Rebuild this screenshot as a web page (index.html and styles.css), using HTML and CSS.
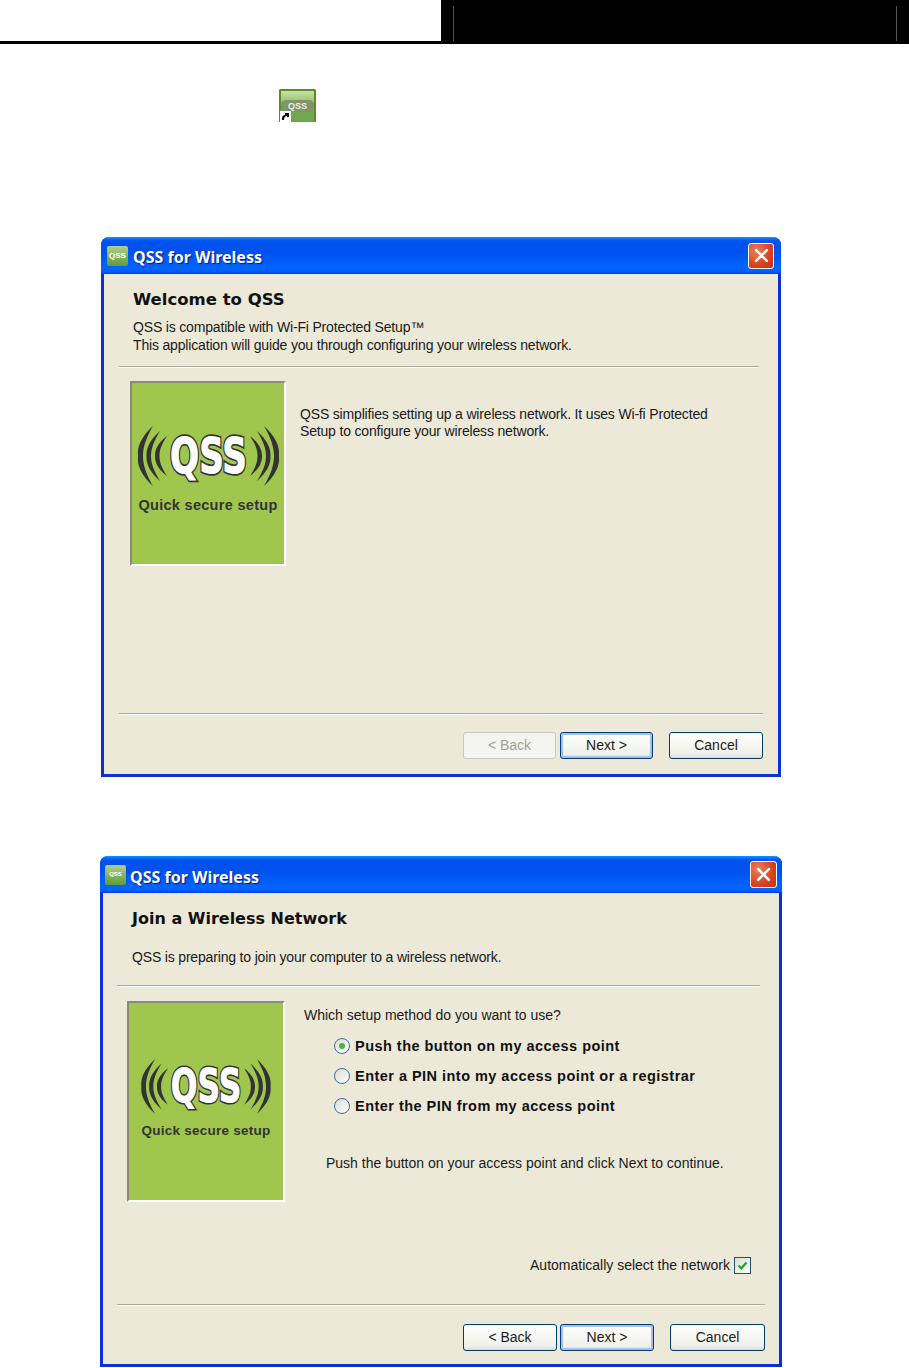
FILE: index.html
```html
<!DOCTYPE html>
<html lang="en">
<head>
    <meta charset="UTF-8">
    <title>QSS for Wireless</title>
    <link rel="stylesheet" href="styles.css">
</head>
<body>
    <div class="page-header">
        <div class="header-left"></div>
        <div class="header-right"></div>
    </div>

    <!-- Desktop shortcut -->
    <div class="shortcut-row">
        <div class="shortcut">
            <span class="shortcut-band">QSS</span>
            <span class="shortcut-arrow">
                <svg viewBox="0 0 9 9" width="9" height="9"><path d="M1 8 L1 6 C1 4 3 3 4 3 L4 1 L8 1 L8 5 L6 5 L6 4 C4 4 3 5 3 8 Z" fill="#000"/></svg>
            </span>
        </div>
    </div>

    <!-- Welcome step -->
    <div class="window window-welcome">
        <div class="titlebar">
            <span class="title-icon">QSS</span>
            <span class="title-text">QSS for Wireless</span>
            <span class="close-btn">
                <svg viewBox="0 0 14 14" width="15" height="15"><path d="M2 2 L12 12 M12 2 L2 12" stroke="#fff" stroke-width="2.4" stroke-linecap="round"/></svg>
            </span>
        </div>
        <div class="head">
            <h2>Welcome to QSS</h2>
            <p class="head-text">QSS is compatible with Wi-Fi Protected Setup™<br>This application will guide you through configuring your wireless network.</p>
        </div>
        <div class="rule rule-head"></div>
        <div class="main">
            <div class="logo">
                <svg class="logo-mark" viewBox="0 0 141 60">
                    <g id="qss-mark">
                        <g id="qss-waves" fill="#333">
                            <path d="M15 0 C3 11 -1 21 0 30 C-1 39 3 49 15 60 C8 48 5 39 5 30 C5 21 8 12 15 0 Z"/>
                            <path d="M22 5 C12 14 8 22 8.500 30 C8 38 12 46 22 55 C16 45 13 38 13 30 C13 22 16 15 22 5 Z"/>
                            <path d="M29 10 C20 17 17 23 17 30 C17 37 20 43 29 50 C24 42 21.500 37 21.500 30 C21.500 23 24 18 29 10 Z"/>
                        </g>
                        <use href="#qss-waves" transform="matrix(-1 0 0 1 141 0)"/>
                        <text class="logo-word logo-word-back" x="70.500" y="47" text-anchor="middle" textLength="77" lengthAdjust="spacingAndGlyphs">QSS</text>
                        <text class="logo-word" x="70.500" y="47" text-anchor="middle" textLength="77" lengthAdjust="spacingAndGlyphs">QSS</text>
                    </g>
                </svg>
                <span class="logo-caption">Quick secure setup</span>
            </div>
            <p class="intro">QSS simplifies setting up a wireless network. It uses Wi-fi Protected<br>Setup to configure your wireless network.</p>
        </div>
        <div class="rule rule-foot"></div>
        <div class="footer">
            <button class="btn btn-disabled">&lt; Back</button>
            <button class="btn btn-default">Next &gt;</button>
            <button class="btn btn-cancel">Cancel</button>
        </div>
    </div>

    <!-- Join network step -->
    <div class="window window-join">
        <div class="titlebar">
            <span class="title-icon">QSS</span>
            <span class="title-text">QSS for Wireless</span>
            <span class="close-btn">
                <svg viewBox="0 0 14 14" width="15" height="15"><path d="M2 2 L12 12 M12 2 L2 12" stroke="#fff" stroke-width="2.4" stroke-linecap="round"/></svg>
            </span>
        </div>
        <div class="head">
            <h2>Join a Wireless Network</h2>
            <p class="head-text head-single">QSS is preparing to join your computer to a wireless network.</p>
        </div>
        <div class="rule rule-head"></div>
        <div class="main">
            <div class="logo">
                <svg class="logo-mark" viewBox="0 0 141 60"><use href="#qss-mark"/></svg>
                <span class="logo-caption">Quick secure setup</span>
            </div>
            <div class="setup">
                <p class="setup-question">Which setup method do you want to use?</p>
                <div class="options">
                    <div class="option"><span class="radio radio-on"></span>Push the button on my access point</div>
                    <div class="option"><span class="radio"></span>Enter a PIN into my access point or a registrar</div>
                    <div class="option"><span class="radio"></span>Enter the PIN from my access point</div>
                </div>
                <p class="setup-hint">Push the button on your access point and click Next to continue.</p>
                <div class="auto-select">
                    Automatically select the network
                    <span class="checkbox">
                        <svg viewBox="0 0 13 13" width="13" height="13"><path d="M2.500 6.500 L5.300 9.300 L10.500 3.500" fill="none" stroke="#21a121" stroke-width="2.200"/></svg>
                    </span>
                </div>
            </div>
        </div>
        <div class="rule rule-foot"></div>
        <div class="footer">
            <button class="btn">&lt; Back</button>
            <button class="btn btn-default">Next &gt;</button>
            <button class="btn btn-cancel">Cancel</button>
        </div>
    </div>
</body>
</html>
```

FILE: styles.css
```css
body {
    margin: 0;
    background-color: #fff;
    font-family: "Liberation Sans", Arial, sans-serif;
    color: #1a1a1a;
    overflow: hidden;
}

/* Page header */
.page-header {
    display: flex;
    height: 44px;
}
.header-left {
    width: 441px;
    border-bottom: 3px solid #000;
}
.header-right {
    flex: 1;
    background: #000;
    position: relative;
}
.header-right::before,
.header-right::after {
    content: "";
    position: absolute;
    top: 6px;
    bottom: 3px;
    width: 1px;
    background: #555;
}
.header-right::before {
    left: 12px;
}
.header-right::after {
    right: 12px;
}

/* Shortcut icon */
.shortcut-row {
    margin: 45px 0 0 279px;
}
.shortcut {
    width: 37px;
    height: 33px;
    box-sizing: border-box;
    border: 2px solid #5d8a2a;
    border-bottom: none;
    border-radius: 2px 2px 0 0;
    background: linear-gradient(#c9dfa8 0, #a3c878 30%, #7da455 50%, #6ea84f 100%);
    display: flex;
    align-items: center;
    justify-content: center;
    position: relative;
}
.shortcut-band {
    font: bold 9px "Liberation Sans", sans-serif;
    color: #eee;
    background: #7f9468;
    border-radius: 5px;
    width: 100%;
    text-align: center;
    line-height: 12px;
    margin-bottom: 1px;
}
.shortcut-arrow {
    position: absolute;
    left: -1px;
    bottom: 0;
    width: 11px;
    height: 11px;
    background: #fff;
    display: flex;
    align-items: center;
    justify-content: center;
}

/* Window frame */
.window {
    box-sizing: border-box;
    background: #ece9d8;
    border: 3px solid #0831d9;
    border-top: none;
    border-radius: 8px 8px 0 0;
    display: flex;
    flex-direction: column;
}
.window-welcome {
    width: 680px;
    height: 540px;
    margin: 115px 0 0 101px;
}
.window-join {
    width: 682px;
    height: 511px;
    margin: 79px 0 0 100px;
}
.titlebar {
    height: 37px;
    margin: 0 -3px;
    padding: 0 7px 0 5px;
    border-radius: 8px 8px 0 0;
    background: linear-gradient(#0997ff 0, #0053ee 10%, #0050ee 40%, #0066ff 85%, #005bff 94%, #003dd7 100%);
    display: flex;
    align-items: center;
    flex-shrink: 0;
}
.window-join .titlebar {
    padding-right: 5px;
}
.title-icon {
    width: 21px;
    height: 20px;
    margin-left: 1px;
    background: linear-gradient(#b2cf8c, #5f9b3a);
    color: #fff;
    font: bold 8px/19px "Liberation Sans", sans-serif;
    text-align: center;
    border-radius: 2px;
}
.window-join .title-icon {
    margin-left: 0;
    font-size: 6px;
}
.title-text {
    margin: 2px 0 0 5px;
    font: bold 16px "Noto Sans", sans-serif;
    color: #fff;
    text-shadow: 1px 1px 1px #0f1089;
    flex: 1;
}
.window-join .title-text {
    margin: 4px 0 0 4px;
}
.close-btn {
    width: 26px;
    height: 26px;
    box-sizing: border-box;
    border: 1px solid #fff;
    border-radius: 3px;
    background: radial-gradient(circle at 30% 30%, #e8815e, #d9411c 60%, #c23210);
    display: flex;
    align-items: center;
    justify-content: center;
}
.window-join .close-btn {
    width: 27px;
    height: 27px;
}

/* Heading block */
.head {
    height: 92px;
    box-sizing: border-box;
    padding: 16px 0 0 29px;
    flex-shrink: 0;
}
h2 {
    margin: 0;
    font: bold 16.500px/20px "DejaVu Sans", sans-serif;
    color: #111;
}
.window-join h2 {
    font-size: 16px;
}
.head-text {
    margin: 8px 0 0;
    font-size: 14px;
    letter-spacing: -0.17px;
    line-height: 18px;
}
.head-single {
    margin-top: 19px;
}
.rule {
    height: 0;
    border-top: 1px solid #aca899;
    border-bottom: 1px solid #fff;
    flex-shrink: 0;
}

/* Main area */
.main {
    flex: 1;
    display: flex;
    align-items: flex-start;
}
.logo {
    box-sizing: border-box;
    background: #a0c64e;
    border: 2px solid;
    border-color: #8b8a78 #fff #fff #8b8a78;
    display: flex;
    flex-direction: column;
    align-items: center;
}
.logo-mark {
    overflow: visible;
}
.logo-word {
    font: bold 50px "DejaVu Sans", sans-serif;
    fill: #fff;
    stroke: #fff;
    stroke-width: 1px;
}
.logo-word-back {
    stroke: #333;
    stroke-width: 4.500px;
    fill: #333;
}
.logo-caption {
    font-weight: bold;
    color: #333;
    white-space: nowrap;
}
.window-welcome .main {
    padding: 13px 0 0 26px;
}
.window-welcome .logo {
    width: 156px;
    height: 185px;
}
.window-welcome .logo-mark {
    width: 141px;
    height: 60px;
    margin-top: 43px;
}
.window-welcome .logo-caption {
    margin-top: 11px;
    font-size: 14.500px;
    letter-spacing: 0.3px;
}
.window-join .main {
    padding: 14px 0 0 24px;
}
.window-join .logo {
    width: 158px;
    height: 201px;
}
.window-join .logo-mark {
    width: 130px;
    height: 55px;
    margin-top: 56px;
}
.window-join .logo-caption {
    margin-top: 9px;
    font-size: 13.500px;
    letter-spacing: 0.25px;
}
.intro {
    margin: 25px 0 0 14px;
    font-size: 14px;
    letter-spacing: -0.17px;
    line-height: 17px;
}

/* Setup options */
.setup {
    flex: 1;
    margin-left: 19px;
    font-size: 14px;
}
.setup-question {
    margin: 5px 0 0;
    line-height: 18px;
}
.options {
    margin: 7px 0 0 30px;
}
.option {
    height: 30px;
    display: flex;
    align-items: center;
    gap: 5px;
    font-size: 14.500px;
    font-weight: bold;
    letter-spacing: 0.47px;
    color: #111;
}
.radio {
    width: 16px;
    height: 16px;
    box-sizing: border-box;
    border: 1px solid #3c6e9e;
    border-radius: 50%;
    background: linear-gradient(135deg, #dcdcd4, #fff);
    position: relative;
}
.radio-on::after {
    content: "";
    position: absolute;
    top: 4px;
    left: 4px;
    width: 6px;
    height: 6px;
    border-radius: 50%;
    background: #3dbb45;
}
.setup-hint {
    margin: 33px 0 0 22px;
    line-height: 18px;
}
.auto-select {
    margin: 84px 28px 0 0;
    display: flex;
    justify-content: flex-end;
    align-items: center;
    gap: 4px;
    line-height: 18px;
}
.checkbox {
    width: 17px;
    height: 17px;
    box-sizing: border-box;
    border: 1px solid #1c5180;
    background: linear-gradient(135deg, #dcdcd4, #fff);
    display: flex;
    align-items: center;
    justify-content: center;
}

/* Footer */
.footer {
    height: 59px;
    box-sizing: border-box;
    padding: 17px 15px 0 0;
    display: flex;
    justify-content: flex-end;
    align-items: flex-start;
    gap: 4px;
    flex-shrink: 0;
}
.btn {
    width: 93px;
    height: 27px;
    padding: 0 0 1px;
    border: 1px solid #003c74;
    border-radius: 3px;
    background: linear-gradient(#fff, #f0f0ea 85%, #dcd8ce);
    font: 14px "Liberation Sans", sans-serif;
    color: #1a1a1a;
}
.btn-default {
    box-shadow: inset 0 0 0 2px #a6bee8;
}
.btn-disabled {
    border-color: #cac8bb;
    background: #f4f4f0;
    color: #a1a192;
}
.btn-cancel {
    width: 94px;
    margin-left: 12px;
}
.window-welcome .rule-head {
    margin: 0 19px 0 15px;
}
.window-welcome .rule-foot {
    margin: 0 15px;
}
.window-join .rule-head {
    margin: 0 19px 0 14px;
}
.window-join .rule-foot {
    margin: 0 14px;
}
.window-join .footer {
    height: 58px;
    padding: 18px 14px 0 0;
    gap: 3px;
}
.window-join .btn {
    width: 94px;
}
.window-join .btn-cancel {
    width: 95px;
    margin-left: 13px;
}
```
